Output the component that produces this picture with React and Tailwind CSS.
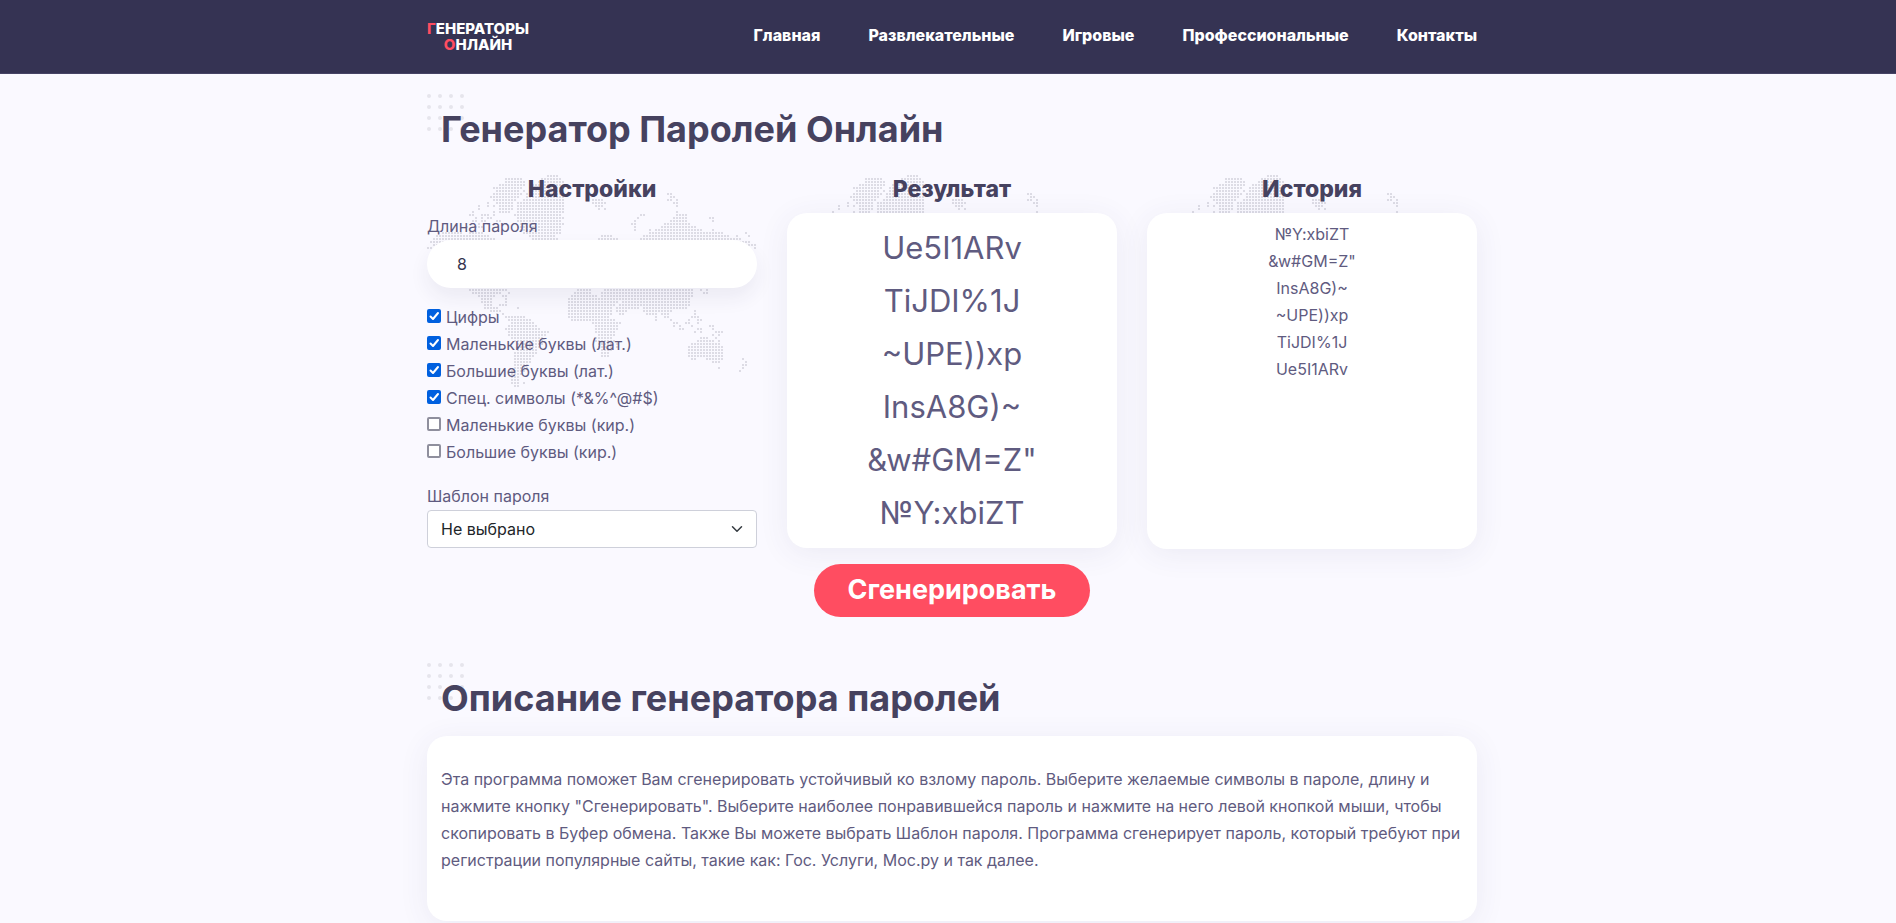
import React from 'react';

const navItems = ['Главная', 'Развлекательные', 'Игровые', 'Профессиональные', 'Контакты'];

const passwords = ['Ue5I1ARv', 'TiJDI%1J', '~UPE))xp', 'InsA8G)~', '&w#GM=Z"', '№Y:xbiZT'];

const historyItems = ['№Y:xbiZT', '&w#GM=Z"', 'InsA8G)~', '~UPE))xp', 'TiJDI%1J', 'Ue5I1ARv'];

const options = [
  { id: 'digits', label: 'Цифры', checked: true },
  { id: 'lat-lower', label: 'Маленькие буквы (лат.)', checked: true },
  { id: 'lat-upper', label: 'Большие буквы (лат.)', checked: true },
  { id: 'special', label: 'Спец. символы (*&%^@#$)', checked: true },
  { id: 'cyr-lower', label: 'Маленькие буквы (кир.)', checked: false },
  { id: 'cyr-upper', label: 'Большие буквы (кир.)', checked: false },
];

const descriptionLines = [
  'Эта программа поможет Вам сгенерировать устойчивый ко взлому пароль. Выберите желаемые символы в пароле, длину и',
  'нажмите кнопку "Сгенерировать". Выберите наиболее понравившейся пароль и нажмите на него левой кнопкой мыши, чтобы',
  'скопировать в Буфер обмена. Также Вы можете выбрать Шаблон пароля. Программа сгенерирует пароль, который требуют при',
  'регистрации популярные сайты, такие как: Гос. Услуги, Мос.ру и так далее.',
];

// Dotted world map: row number -> runs of columns
const mapRows = {
  0: '40-43',
  1: '26-31 38-44',
  2: '26-32 37-45',
  3: '24-32 35-45',
  4: '22-31 34-45',
  5: '23-30 32 34-45',
  6: '22-31 33-44 80-81',
  7: '21-30 33-45 81-82',
  8: '22-29 32-45 55-58 80-81 83',
  9: '20 23-28 30-45 55-59 82-83',
  10: '17 20 22 24-28 30-45 56-58 83',
  11: '17 24-28 30-45 57 59',
  12: '15 22 24-27 30-45 83',
  13: '14-15 18-20 22 29-44 71-72 83-86',
  14: '16 18 20-21 30-45 70 82-86 94-95',
  15: '15-16 18-19 23-24 30-44 69 81-86 95',
  16: '17 20 22 26 31-45 68-69 79-87',
  17: '13 16-18 30-44 69 78-89',
  18: '31-44 69 74 76-91 95',
  19: '5-11 14-18 32-44 74-98 106',
  20: '3-20 34-42 58-61 72-100 103 107',
  21: '2-22 35-43 57-63 71-104',
  22: '1-20 36-40 104-107',
  23: '2-5 105-109',
  24: '0-1 109',
  38: '14-26 50-54 59-88 91 93',
  39: '15-24 27 49-54 58-88 92-93',
  40: '17-22 25-26 48-56 58-88',
  41: '18-21 26 47-87',
  42: '18-21 26 47-63 65-87',
  43: '19-21 24-26 47-62 64-87',
  44: '19-23 30 47-61 63-70 72-86',
  45: '21-24 47-61 63-66 72-81 89',
  46: '23 25 47-61 64-65 73-76 78-80 89',
  47: '26-32 47-60 76 79-80 88-90',
  48: '27-34 48-62 76 81 87 90-91',
  49: '28-35 55-64 82-83 86-87 90',
  50: '27-36 56-63 82 84 88 94-95',
  51: '26-37 56-63 84-85 90-91 95',
  52: '27-40 56-62 89 91 96-98',
  53: '27-39 57-62 95 97',
  54: '28-38 56-61 91-93 96',
  55: '29-38 56-62 90-95 97',
  56: '30-38 57-61 63 88-97',
  57: '30-37 57-61 63 87-98',
  58: '30-36 58-61 87-98',
  59: '29-36 58-60 87-98',
  60: '29-35 58-60 87-98',
  61: '29-34 88-89 93-98 105',
  62: '29-34 95-97 106',
  63: '29-33 105-106',
  64: '29-33 97 105',
  65: '28-32 104',
  66: '28-31',
  67: '28-30',
  68: '28-30',
  69: '28-30 32',
  70: '29-30',
};

const mapPath = Object.entries(mapRows)
  .flatMap(([row, runs]) =>
    runs.split(' ').map((run) => {
      const [from, to = from] = run.split('-').map(Number);
      return `M${from * 3} ${row * 3 + 1}H${to * 3 + 2}`;
    })
  )
  .join('');

const WorldMap = () => (
  <svg
    className="absolute top-0 left-0 w-full max-w-[330px]"
    viewBox="0 0 330 213"
    fill="none"
    aria-hidden="true"
  >
    <path d={mapPath} stroke="#dddce5" strokeWidth="2" strokeDasharray="2 1" shapeRendering="crispEdges" />
  </svg>
);

const Dots = () => (
  <svg className="absolute top-0 left-0" width="37" height="37" fill="#e6e5ec" aria-hidden="true">
    {[2, 13, 24, 35].map((y) =>
      [2, 13, 24, 35].map((x) => <circle key={`${x}-${y}`} cx={x} cy={y} r="2" />)
    )}
  </svg>
);

const Title = ({ as: Tag = 'h2', children }) => (
  <div className="relative pt-3 pl-3.5">
    <Dots />
    <Tag className="relative text-[36px] leading-[46px] font-bold text-[#46425f]">{children}</Tag>
  </div>
);

const Column = ({ title, children }) => (
  <section className="relative">
    <WorldMap />
    <div className="relative">
      <h3 className="h-[38px] text-center text-[23px] leading-7 font-extrabold text-[#46425f]">{title}</h3>
      {children}
    </div>
  </section>
);

const Option = ({ id, label, checked }) => (
  <div className="flex gap-[5px] leading-[27px]">
    <span className="relative mt-[5px] size-3.5">
      <input
        id={id}
        type="checkbox"
        defaultChecked={checked}
        className="peer block size-3.5 appearance-none rounded-[2px] border-2 border-[#8f8f9d] bg-white checked:border-[#0060df] checked:bg-[#0060df]"
      />
      <svg
        className="pointer-events-none absolute inset-0 hidden peer-checked:block"
        viewBox="0 0 14 14"
        fill="none"
        stroke="#fff"
        strokeWidth="2"
        strokeLinecap="round"
        strokeLinejoin="round"
      >
        <path d="M3.5 7.5 6 10l5-6" />
      </svg>
    </span>
    <label htmlFor={id}>{label}</label>
  </div>
);

const App = () => {
  return (
    <div className="min-h-screen overflow-hidden bg-[#faf9ff] font-['Inter','Liberation_Sans',sans-serif] text-base text-[#5f5b80]">
      <header className="border-b border-[#464365] bg-[#353353] pl-2">
        <div className="mx-auto flex h-[73px] max-w-[1050px] items-center justify-between">
          <a href="#" className="text-center text-[15px] leading-4 font-extrabold text-white">
            <span className="text-[#ff4d61]">Г</span>ЕНЕРАТОРЫ
            <br />
            <span className="text-[#ff4d61]">О</span>НЛАЙН
          </a>
          <nav className="flex gap-12 pb-[3px] text-base font-extrabold text-white">
            {navItems.map((item) => (
              <a key={item} href="#">
                {item}
              </a>
            ))}
          </nav>
        </div>
      </header>

      <main className="pl-2">
        <div className="mx-auto max-w-[1050px] pt-5">
          <Title as="h1">Генератор Паролей Онлайн</Title>

          <div className="mt-[23px] grid grid-cols-3 gap-[30px]">
            <Column title="Настройки">
              <label htmlFor="length" className="block leading-[27px]">
                Длина пароля
              </label>
              <input
                id="length"
                type="text"
                defaultValue="8"
                className="h-12 w-full rounded-full bg-white px-[30px] text-[#35334f] shadow-[0_10px_20px_rgba(40,40,80,0.07)] outline-none"
              />
              <div className="mt-4">
                {options.map((option) => (
                  <Option key={option.id} {...option} />
                ))}
              </div>
              <label htmlFor="template" className="mt-[17px] block leading-[27px]">
                Шаблон пароля
              </label>
              <div className="relative">
                <select
                  id="template"
                  className="block h-[38px] w-full appearance-none rounded border border-[#ced0da] bg-white px-[13px] text-[#212529]"
                >
                  <option>Не выбрано</option>
                </select>
                <svg
                  className="pointer-events-none absolute top-[13px] right-3.5 size-3"
                  viewBox="0 0 16 16"
                  fill="none"
                  stroke="#343a40"
                  strokeWidth="2"
                  strokeLinecap="round"
                  strokeLinejoin="round"
                >
                  <path d="m2 5 6 6 6-6" />
                </svg>
              </div>
            </Column>

            <Column title="Результат">
              <div className="flex flex-col items-center rounded-[20px] bg-white pt-2 pb-[9px] text-[31px] leading-[53px] shadow-[0_5px_30px_rgba(60,60,120,0.08)]">
                {passwords.map((password) => (
                  <button key={password} type="button">
                    {password}
                  </button>
                ))}
              </div>
              <div className="mt-4 text-center">
                <button
                  type="button"
                  className="h-[53px] rounded-full bg-[#ff4d61] px-[33px] text-[27px] font-bold text-white"
                >
                  Сгенерировать
                </button>
              </div>
            </Column>

            <Column title="История">
              <ul className="min-h-[336px] rounded-[20px] bg-white py-2 text-center leading-[27px] shadow-[0_5px_30px_rgba(60,60,120,0.08)]">
                {historyItems.map((item) => (
                  <li key={item}>{item}</li>
                ))}
              </ul>
            </Column>
          </div>

          <div className="mt-[46px]">
            <Title>Описание генератора паролей</Title>
            <div className="mt-[15px] rounded-[20px] bg-white px-3.5 pt-[30px] pb-[47px] leading-[27px] shadow-[0_5px_30px_rgba(60,60,120,0.08)]">
              {descriptionLines.map((line) => (
                <p key={line}>{line}</p>
              ))}
            </div>
          </div>
        </div>
      </main>
    </div>
  );
};

export default App;
